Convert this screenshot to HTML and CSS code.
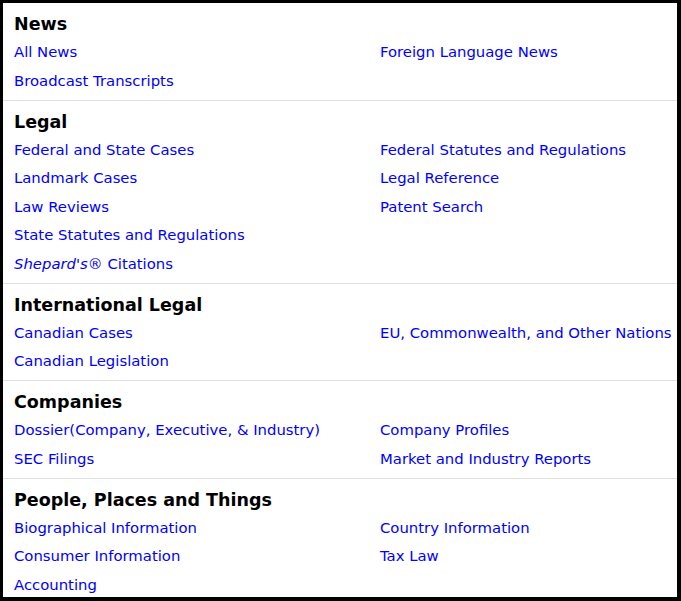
FILE: index.html
```html
<!DOCTYPE html>
<html lang="en">
<head>
    <meta charset="UTF-8">
    <title>Sources</title>
    <link rel="stylesheet" href="styles.css">
</head>
<body>
    <div class="frame">
        <div class="group">
            <h2>News</h2>
            <div class="links">
                <a href="#">All News</a>
                <a href="#">Foreign Language News</a>
                <a href="#">Broadcast Transcripts</a>
            </div>
        </div>
        <div class="group">
            <h2>Legal</h2>
            <div class="links">
                <a href="#">Federal and State Cases</a>
                <a href="#">Federal Statutes and Regulations</a>
                <a href="#">Landmark Cases</a>
                <a href="#">Legal Reference</a>
                <a href="#">Law Reviews</a>
                <a href="#">Patent Search</a>
                <a href="#">State Statutes and Regulations</a>
                <span></span>
                <a href="#"><i>Shepard's</i>&reg; Citations</a>
            </div>
        </div>
        <div class="group">
            <h2>International Legal</h2>
            <div class="links">
                <a href="#">Canadian Cases</a>
                <a href="#">EU, Commonwealth, and Other Nations</a>
                <a href="#">Canadian Legislation</a>
            </div>
        </div>
        <div class="group">
            <h2>Companies</h2>
            <div class="links">
                <a href="#">Dossier(Company, Executive, &amp; Industry)</a>
                <a href="#">Company Profiles</a>
                <a href="#">SEC Filings</a>
                <a href="#">Market and Industry Reports</a>
            </div>
        </div>
        <div class="group">
            <h2>People, Places and Things</h2>
            <div class="links">
                <a href="#">Biographical Information</a>
                <a href="#">Country Information</a>
                <a href="#">Consumer Information</a>
                <a href="#">Tax Law</a>
                <a href="#">Accounting</a>
            </div>
        </div>
    </div>
</body>
</html>
```

FILE: styles.css
```css
body {
    margin: 0;
    font-family: "DejaVu Sans", Verdana, sans-serif;
    background: #fff;
}

.frame {
    height: 601px;
    box-sizing: border-box;
    border-style: solid;
    border-color: #000;
    border-width: 3px 4px 4px 3px;
    overflow: hidden;
}

.group {
    padding: 8px 0 4.5px 11px;
    border-bottom: 1px solid #e0e0e0;
}

.group h2 {
    margin: 0;
    font-size: 17.5px;
    line-height: 27px;
    color: #000;
}

.links {
    display: grid;
    grid-template-columns: 366px 1fr;
    grid-auto-rows: 28.5px;
    align-items: center;
}

.links a {
    color: #0000ff;
    font-size: 14.85px;
    text-decoration: none;
    white-space: nowrap;
}
```
